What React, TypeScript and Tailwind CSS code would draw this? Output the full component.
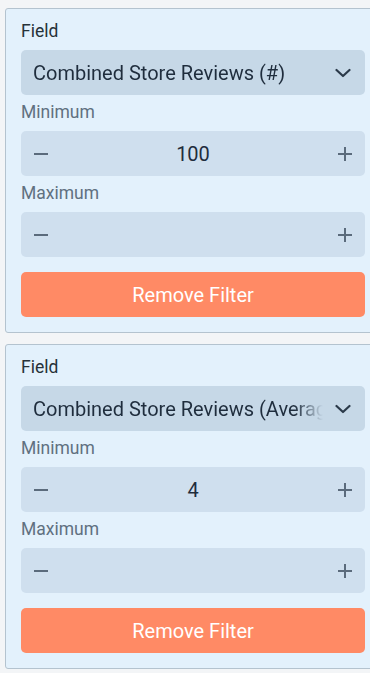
import React from 'react';

type Filter = { field: string; min: string; max: string };

const filters: Filter[] = [
  { field: 'Combined Store Reviews (#)', min: '100', max: '' },
  { field: 'Combined Store Reviews (Average Rating)', min: '4', max: '' },
];

const Minus = () => (
  <svg width="16" height="16" viewBox="0 0 16 16" fill="none" stroke="currentColor" strokeWidth="2">
    <path d="M1 8h14" />
  </svg>
);

const Plus = () => (
  <svg width="16" height="16" viewBox="0 0 16 16" fill="none" stroke="currentColor" strokeWidth="2">
    <path d="M1 8h14M8 1v14" />
  </svg>
);

const Chevron = () => (
  <svg width="16" height="10" viewBox="0 0 16 10" fill="none" stroke="currentColor" strokeWidth="2.2" strokeLinecap="round" strokeLinejoin="round">
    <path d="M1.5 2l6.5 6 6.5-6" />
  </svg>
);

const Stepper: React.FC<{ value: string }> = ({ value }) => (
  <div className="mt-[7px] h-[45px] rounded-[5px] bg-[#cfdfee] flex items-center px-3 text-[#5b6b7c]">
    <Minus />
    <div className="flex-1 text-center text-[20px] text-[#1f2d3d]">{value}</div>
    <Plus />
  </div>
);

const FilterCard: React.FC<{ filter: Filter }> = ({ filter }) => (
  <div className="w-[376px] bg-[#e3f1fc] border border-[#b4c3cf] rounded-[3px] px-[15px] pt-[10px] pb-[15px]">
    <div className="text-[17.5px] leading-6 text-[#263238]">Field</div>
    <div className="mt-[7px] h-[45px] rounded-[5px] bg-[#c6d8e7] flex items-center pl-3 pr-[14px] text-[#2b3a4a]">
      <div className="flex-1 min-w-0 overflow-hidden whitespace-nowrap text-[20px] text-[#1f2d3d] [mask-image:linear-gradient(to_right,black_90%,transparent)]">
        {filter.field}
      </div>
      <div className="ml-3 shrink-0">
        <Chevron />
      </div>
    </div>
    <div className="mt-[5px] text-[17.5px] leading-6 text-[#607080]">Minimum</div>
    <Stepper value={filter.min} />
    <div className="mt-[5px] text-[17.5px] leading-6 text-[#607080]">Maximum</div>
    <Stepper value={filter.max} />
    <button className="mt-[15px] w-full h-[45px] rounded-[5px] bg-[#ff8a65] text-white text-[20px]">
      Remove Filter
    </button>
  </div>
);

export default function App() {
  return (
    <div className="w-[370px] h-[673px] overflow-hidden bg-[#f3f5f7] pl-[5px] pt-2 flex flex-col gap-[11px] font-['Roboto',sans-serif]">
      {filters.map((f, i) => (
        <FilterCard key={i} filter={f} />
      ))}
    </div>
  );
}
